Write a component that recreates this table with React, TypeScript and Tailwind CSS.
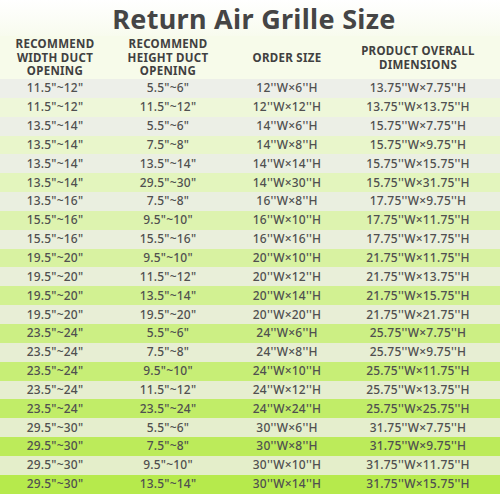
import React from "react";

const rows: [string, string, string, string][] = [
  ['11.5"~12"', '5.5"~6"', "12''W×6''H", "13.75''W×7.75''H"],
  ['11.5"~12"', '11.5"~12"', "12''W×12''H", "13.75''W×13.75''H"],
  ['13.5"~14"', '5.5"~6"', "14''W×6''H", "15.75''W×7.75''H"],
  ['13.5"~14"', '7.5"~8"', "14''W×8''H", "15.75''W×9.75''H"],
  ['13.5"~14"', '13.5"~14"', "14''W×14''H", "15.75''W×15.75''H"],
  ['13.5"~14"', '29.5"~30"', "14''W×30''H", "15.75''W×31.75''H"],
  ['13.5"~16"', '7.5"~8"', "16''W×8''H", "17.75''W×9.75''H"],
  ['15.5"~16"', '9.5"~10"', "16''W×10''H", "17.75''W×11.75''H"],
  ['15.5"~16"', '15.5"~16"', "16''W×16''H", "17.75''W×17.75''H"],
  ['19.5"~20"', '9.5"~10"', "20''W×10''H", "21.75''W×11.75''H"],
  ['19.5"~20"', '11.5"~12"', "20''W×12''H", "21.75''W×13.75''H"],
  ['19.5"~20"', '13.5"~14"', "20''W×14''H", "21.75''W×15.75''H"],
  ['19.5"~20"', '19.5"~20"', "20''W×20''H", "21.75''W×21.75''H"],
  ['23.5"~24"', '5.5"~6"', "24''W×6''H", "25.75''W×7.75''H"],
  ['23.5"~24"', '7.5"~8"', "24''W×8''H", "25.75''W×9.75''H"],
  ['23.5"~24"', '9.5"~10"', "24''W×10''H", "25.75''W×11.75''H"],
  ['23.5"~24"', '11.5"~12"', "24''W×12''H", "25.75''W×13.75''H"],
  ['23.5"~24"', '23.5"~24"', "24''W×24''H", "25.75''W×25.75''H"],
  ['29.5"~30"', '5.5"~6"', "30''W×6''H", "31.75''W×7.75''H"],
  ['29.5"~30"', '7.5"~8"', "30''W×8''H", "31.75''W×9.75''H"],
  ['29.5"~30"', '9.5"~10"', "30''W×10''H", "31.75''W×11.75''H"],
  ['29.5"~30"', '13.5"~14"', "30''W×14''H", "31.75''W×15.75''H"],
];

// blend two rgb colours, t from 0 to 1
function mix(a: number[], b: number[], t: number) {
  const c = a.map((v, i) => Math.round(v + (b[i] - v) * t));
  return `rgb(${c[0]}, ${c[1]}, ${c[2]})`;
}

const LIGHT_TOP = [237, 239, 233];
const LIGHT_BOTTOM = [228, 238, 200];
const GREEN_TOP = [241, 248, 224];
const GREEN_BOTTOM = [182, 234, 76];

const cols = "grid grid-cols-[110px_116px_122px_140px]";

export default function App() {
  return (
    <div className="w-[500px] h-[494px] overflow-hidden bg-white font-['Noto_Sans','Open_Sans',sans-serif] text-[#505050]">
      {/* Title */}
      <div className="h-[36px] bg-gradient-to-b from-white to-[#f8fbee] flex items-center justify-center">
        <h1 className="text-[27px] font-bold text-[#454545] tracking-[0.3px] leading-none pt-[1px] pl-[8px]">
          Return Air Grille Size
        </h1>
      </div>

      {/* Header */}
      <div className={`${cols} h-[43px] bg-[#f7fbea] items-center text-[11.5px] font-bold leading-[13.5px] tracking-[0.3px] text-[#404040] text-center`}>
        <div>
          RECOMMEND
          <br />
          WIDTH DUCT
          <br />
          OPENING
        </div>
        <div>
          RECOMMEND
          <br />
          HEIGHT DUCT
          <br />
          OPENING
        </div>
        <div>ORDER SIZE</div>
        <div>
          PRODUCT OVERALL
          <br />
          DIMENSIONS
        </div>
      </div>

      {/* Rows */}
      {rows.map((r, i) => {
        const t = i / (rows.length - 1);
        const bg = i % 2 === 0 ? mix(LIGHT_TOP, LIGHT_BOTTOM, t) : mix(GREEN_TOP, GREEN_BOTTOM, t);
        return (
          <div
            key={i}
            className={`${cols} h-[18.85px] items-center text-center text-[12px] font-medium leading-none tracking-[0.2px]`}
            style={{ backgroundColor: bg }}
          >
            <div>{r[0]}</div>
            <div>{r[1]}</div>
            <div>{r[2]}</div>
            <div>{r[3]}</div>
          </div>
        );
      })}
    </div>
  );
}
